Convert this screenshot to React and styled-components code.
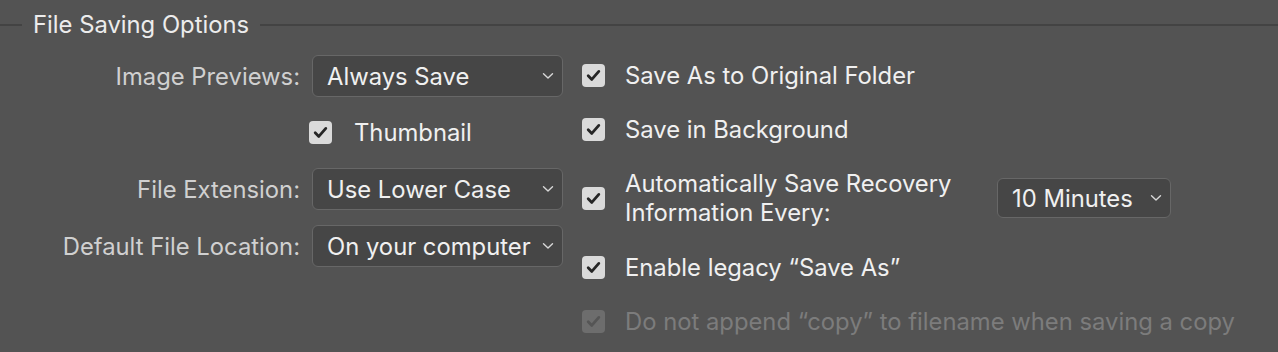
import React from 'react';
import styled, { createGlobalStyle } from 'styled-components';

const GlobalStyle = createGlobalStyle`
  html, body {
    margin: 0;
    padding: 0;
    background: #535353;
  }
  body {
    font-family: Inter, "Noto Sans", "Liberation Sans", sans-serif;
    -webkit-font-smoothing: antialiased;
  }
`;

const Panel = styled.fieldset`
  margin: 11px 0 0 0;
  padding: 9px 0 0 0;
  border: none;
  border-top: 2px solid #434343;
  min-width: 0;
  height: 330px;
  box-sizing: border-box;

  legend {
    margin-left: 22px;
    padding: 0 11px;
    font-size: 23.8px;
    line-height: 28px;
    color: #ececec;
  }
`;

const Columns = styled.div`
  display: flex;
  align-items: flex-start;
`;

const LeftGrid = styled.div`
  display: grid;
  grid-template-columns: 300px 251px;
  grid-template-rows: 56px 56px 58px 56px;
  column-gap: 12px;
  align-items: center;
`;

const Label = styled.label`
  text-align: right;
  font-size: 23.8px;
  color: #d0d0d0;
  white-space: nowrap;
`;

const SelectBox = styled.div`
  display: flex;
  align-items: center;
  justify-content: space-between;
  box-sizing: border-box;
  width: ${({ $width }) => $width || '251px'};
  height: ${({ $height }) => $height || '42px'};
  padding: 0 8px 0 14px;
  background: #464646;
  border: 1.5px solid #676767;
  border-radius: 6px;
  font-size: 23.8px;
  color: #f0f0f0;
  white-space: nowrap;

  svg {
    flex-shrink: 0;
    margin-left: 6px;
  }
`;

const RightCol = styled.div`
  display: flex;
  flex-direction: column;
  margin-left: 19px;
`;

const CheckRow = styled.div`
  display: flex;
  align-items: center;
  height: ${({ $tall }) => ($tall ? '84px' : '54px')};
  gap: ${({ $gap }) => $gap || '20px'};
  margin-left: ${({ $shift }) => $shift || '0'};
  font-size: 23.8px;
  color: ${({ $disabled }) => ($disabled ? '#7c7c7c' : '#f0f0f0')};
  white-space: nowrap;
`;

const Box = styled.span`
  display: inline-flex;
  align-items: center;
  justify-content: center;
  width: 23px;
  height: 23px;
  flex-shrink: 0;
  border-radius: 4px;
  background: ${({ $disabled }) => ($disabled ? '#6d6d6d' : '#dadada')};
`;

const TwoLine = styled.span`
  width: 340px;
  line-height: 29px;
  white-space: normal;
`;

const RecoveryWrap = styled.div`
  display: flex;
  align-items: center;
  gap: 32px;
`;

const Chevron = () => (
  <svg width="12" height="8" viewBox="0 0 12 8">
    <path d="M1.5 1.8 L6 6 L10.5 1.8" fill="none" stroke="#d8d8d8" strokeWidth="1.4" strokeLinecap="round" strokeLinejoin="round" />
  </svg>
);

const Check = ({ disabled }) => (
  <Box $disabled={disabled}>
    <svg width="15" height="13" viewBox="0 0 15 13">
      <path
        d="M2.2 6.8 L5.8 10.4 L12.8 2.4"
        fill="none"
        stroke={disabled ? '#555555' : '#262626'}
        strokeWidth="2.8"
        strokeLinecap="round"
        strokeLinejoin="round"
      />
    </svg>
  </Box>
);

const Select = ({ value, width, height }) => (
  <SelectBox $width={width} $height={height}>
    <span>{value}</span>
    <Chevron />
  </SelectBox>
);

const App = () => (
  <>
    <GlobalStyle />
    <Panel>
      <legend>File Saving Options</legend>
      <Columns>
        <LeftGrid>
          <Label>Image Previews:</Label>
          <Select value="Always Save" />
          <span />
          <CheckRow $gap="22px" $shift="-3px">
            <Check />
            Thumbnail
          </CheckRow>
          <Label>File Extension:</Label>
          <Select value="Use Lower Case" />
          <Label>Default File Location:</Label>
          <Select value="On your computer" />
        </LeftGrid>

        <RightCol>
          <CheckRow>
            <Check />
            Save As to Original Folder
          </CheckRow>
          <CheckRow>
            <Check />
            Save in Background
          </CheckRow>
          <CheckRow $tall>
            <Check />
            <RecoveryWrap>
              <TwoLine>
                Automatically Save Recovery
                <br />
                Information Every:
              </TwoLine>
              <Select value="10 Minutes" width="174px" height="40px" />
            </RecoveryWrap>
          </CheckRow>
          <CheckRow>
            <Check />
            Enable legacy “Save As”
          </CheckRow>
          <CheckRow $disabled>
            <Check disabled />
            Do not append “copy” to filename when saving a copy
          </CheckRow>
        </RightCol>
      </Columns>
    </Panel>
  </>
);

export default App;
